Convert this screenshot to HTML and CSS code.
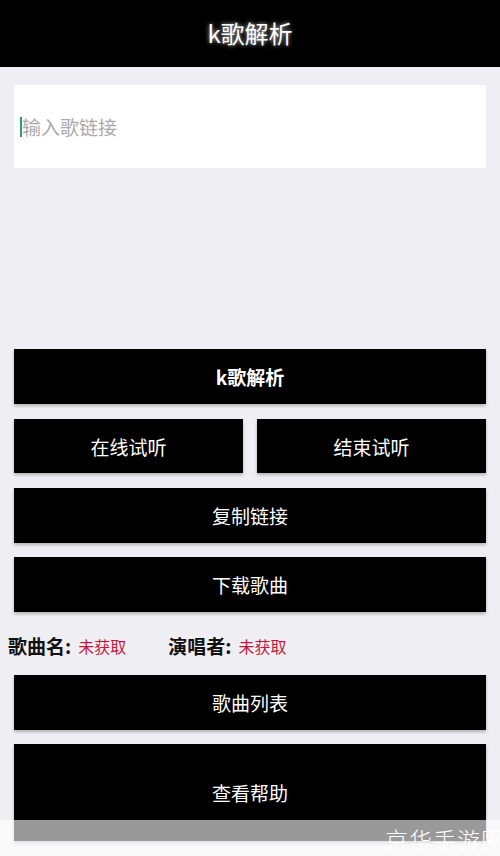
FILE: index.html
```html
<!DOCTYPE html>
<html lang="zh">
<head>
<meta charset="utf-8">
<title>k歌解析</title>
<link rel="stylesheet" href="styles.css">
</head>
<body>
<header class="topbar"><h1 class="title">k歌解析</h1></header>
<main class="content">
  <div class="input-box"><span class="caret"></span><span class="placeholder">输入歌链接</span></div>
  <div class="btn btn-first">k歌解析</div>
  <div class="btn-row">
    <div class="btn btn-half">在线试听</div>
    <div class="btn btn-half">结束试听</div>
  </div>
  <div class="btn">复制链接</div>
  <div class="btn">下载歌曲</div>
  <div class="info-row">
    <span class="label">歌曲名:</span><span class="value">未获取</span>
    <span class="label label-second">演唱者:</span><span class="value">未获取</span>
  </div>
  <div class="btn btn-list">歌曲列表</div>
  <div class="btn btn-help">查看帮助</div>
</main>
<div class="watermark"><span class="wm-text">京华手游网</span></div>
</body>
</html>
```
FILE: styles.css
```css
html, body {
  margin: 0;
  padding: 0;
}
body {
  width: 500px;
  height: 856px;
  overflow: hidden;
  background: #efeff3;
  font-family: "Noto Sans CJK SC", "Noto Sans", sans-serif;
  position: relative;
}
.topbar {
  height: 67px;
  background: #000;
  display: flex;
  align-items: center;
  justify-content: center;
}
.title {
  margin: 0;
  color: #fff;
  font-size: 24px;
  font-weight: 400;
  text-shadow: 0 0 4px rgba(255,255,255,0.8);
  line-height: 1;
  padding-bottom: 2px;
}
.content {
  padding: 0 14px;
  display: flex;
  flex-direction: column;
}
.input-box {
  margin-top: 18px;
  height: 83px;
  background: #fff;
  display: flex;
  align-items: center;
  padding-left: 6px;
}
.caret {
  width: 2px;
  height: 20px;
  background: #2a9d80;
}
.placeholder {
  color: #a9a9a9;
  font-size: 19px;
}
.btn {
  height: 55px;
  background: #000;
  color: #fff;
  font-size: 19px;
  display: flex;
  align-items: center;
  justify-content: center;
  box-shadow: 0 2px 3px rgba(0,0,0,0.25);
  margin-top: 14px;
}
.btn-first {
  margin-top: 181px;
  font-weight: 700;
}
.btn-row {
  display: flex;
  gap: 14px;
  margin-top: 15px;
}
.btn-row .btn-half {
  flex: 1;
  margin-top: 0;
  height: 54px;
}
.btn-row + .btn {
  margin-top: 15px;
}
.info-row {
  height: 63px;
  display: flex;
  align-items: center;
  margin-left: -6px;
  padding-top: 4px;
  box-sizing: border-box;
}
.label {
  font-size: 19px;
  font-weight: 700;
  color: #111;
}
.value {
  font-size: 16px;
  color: #c5173e;
  margin-left: 7px;
}
.label-second {
  margin-left: 42px;
}
.btn-list {
  margin-top: 0;
}
.btn-help {
  margin-top: 14px;
  height: 97px;
}
.watermark {
  position: absolute;
  left: 0;
  top: 820px;
  width: 500px;
  height: 36px;
  background: rgba(255,255,255,0.6);
  overflow: hidden;
}
.wm-text {
  position: absolute;
  left: 385px;
  top: 8px;
  line-height: 1;
  color: #fff;
  font-size: 23px;
  font-weight: 300;
  letter-spacing: 1px;
  white-space: nowrap;
}
```
